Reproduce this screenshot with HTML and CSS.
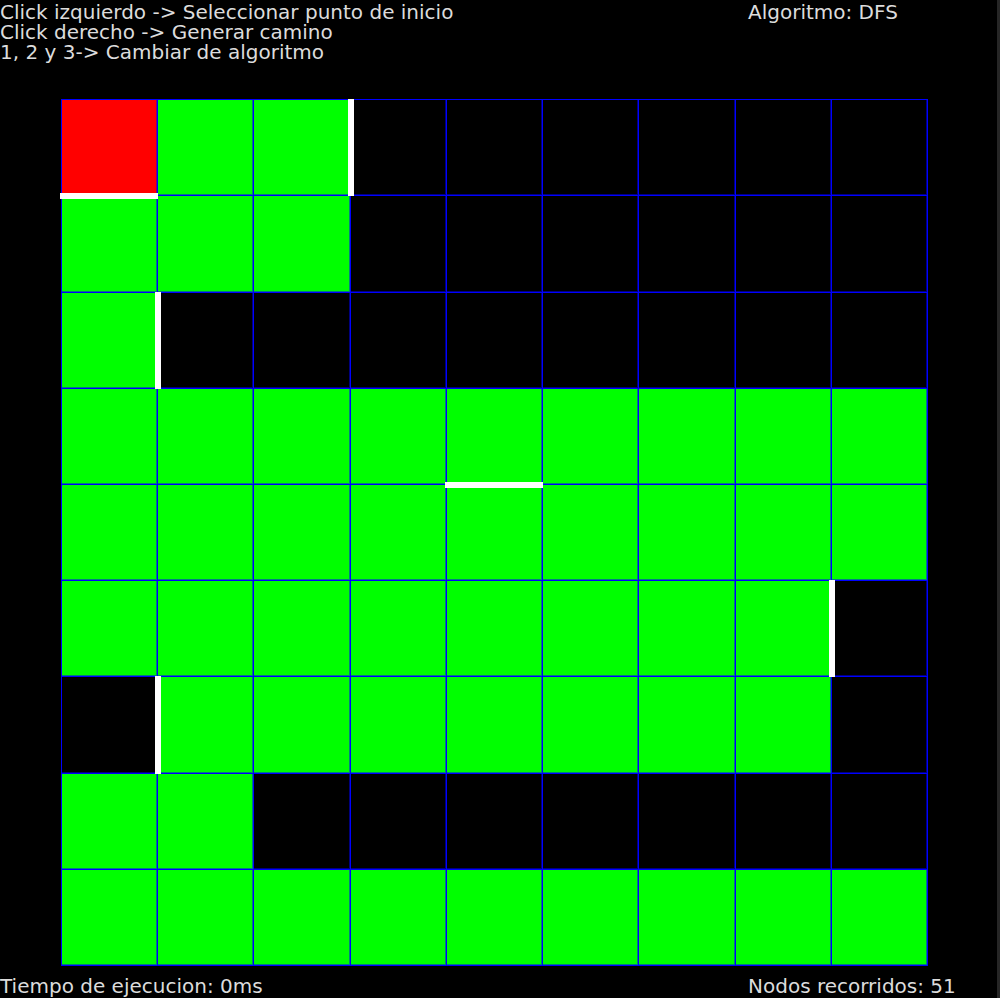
FILE: index.html
```html
<!DOCTYPE html>
<html>
  <head>
    <title>Laberinto</title>
    <meta name="viewport" content="width=device-width, initial-scale=1.0">
    <link rel="stylesheet" href="styles.css">
  </head>
  <body>
    <div class="page">
      <div class="info">
        <div>
          <p>Click izquierdo -&gt; Seleccionar punto de inicio</p>
          <p>Click derecho -&gt; Generar camino</p>
          <p>1, 2 y 3-&gt; Cambiar de algoritmo</p>
        </div>
        <div>
          <p>Algoritmo: DFS</p>
        </div>
      </div>

      <div class="board" id="board"></div>

      <div class="info bottom">
        <p>Tiempo de ejecucion: 0ms</p>
        <p>Nodos recorridos: 51</p>
      </div>
    </div>

    <script>
      // s = inicio, g = recorrido, . = libre
      const rows = [
        's g g . . . . . .',
        'g g g . . . . . .',
        'g . . . . . . . .',
        'g g g g g g g g g',
        'g g g g g g g g g',
        'g g g g g g g g .',
        '. g g g g g g g .',
        'g g . . . . . . .',
        'g g g g g g g g g'
      ];
      // paredes: [fila, columna, lado]
      const walls = [
        [0, 0, 'wall-b'],
        [0, 2, 'wall-r'],
        [2, 0, 'wall-r'],
        [3, 4, 'wall-b'],
        [5, 7, 'wall-r'],
        [6, 0, 'wall-r']
      ];
      const board = document.querySelector('#board');

      rows.forEach((row, r) => {
        row.split(' ').forEach((c, col) => {
          const cell = document.createElement('div');
          cell.className = 'cell';
          if (c === 's') cell.classList.add('start');
          if (c === 'g') cell.classList.add('visited');
          walls.forEach(w => {
            if (w[0] === r && w[1] === col) cell.classList.add(w[2]);
          });
          board.appendChild(cell);
        });
      });
    </script>
  </body>
</html>
```

FILE: styles.css
```css
body {
  margin: 0;
  background-color: #000;
  color: #dcdcdc;
  font-family: "DejaVu Sans", Verdana, sans-serif;
  font-size: 20px;
  line-height: 20px;
}
p {
  margin: 0;
  white-space: nowrap;
}
.page {
  box-sizing: border-box;
  min-height: 998px;
  border-right: 3px solid #262626;
  overflow: hidden;
}
.info {
  display: grid;
  grid-template-columns: 748px 1fr;
  padding-top: 2px;
}
.info.bottom {
  padding-top: 0;
  margin-top: 10px;
}
.board {
  display: grid;
  grid-template-columns: 95px 95px 96px 95px 95px 95px 96px 95px 95px;
  grid-template-rows: 95px 96px 95px 95px 95px 95px 96px 95px 95px;
  gap: 1px;
  padding: 1px;
  width: 867px;
  height: 867px;
  box-sizing: border-box;
  margin: 37px 0 0 61px;
  background-color: #0000ff;
}
.cell {
  position: relative;
  background-color: #000;
  box-shadow: inset -1px -1px 0 rgba(0, 0, 255, 0.5);
}
.cell.visited {
  background-color: #00ff00;
}
.cell.start {
  background-color: #ff0000;
}
.wall-r::after,
.wall-b::after {
  content: "";
  position: absolute;
  background-color: #fff;
  z-index: 1;
}
.wall-r::after {
  top: -1px;
  bottom: -1px;
  right: -4px;
  width: 6px;
}
.wall-b::after {
  left: -2px;
  right: -1px;
  bottom: -4px;
  height: 6px;
}
```
